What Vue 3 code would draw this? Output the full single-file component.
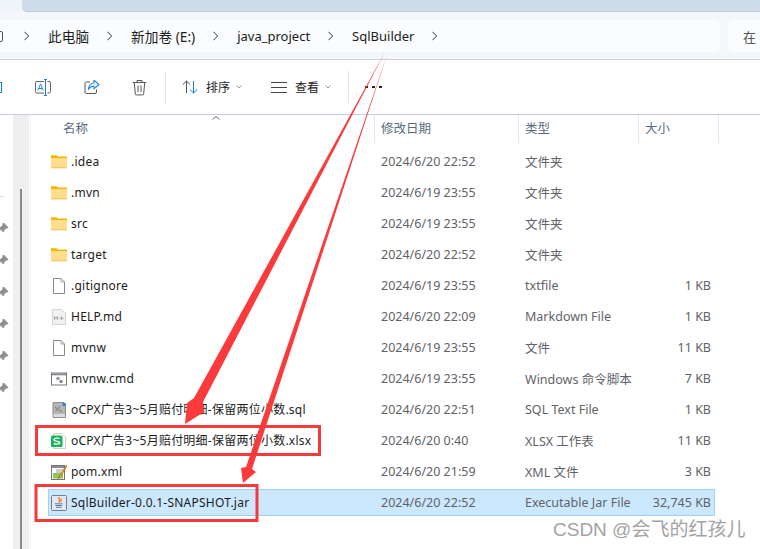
<script setup>
const crumbs = [
  { t: '此电脑', cjk: true },
  { t: '新加卷 (E:)', cjk: true },
  { t: 'java_project', cjk: false },
  { t: 'SqlBuilder', cjk: false }
]
const pins = [1, 2, 3, 4, 5, 6]
const files = [
  { n: '.idea', d: '2024/6/20 22:52', t: '文件夹', s: '', k: 'folder' },
  { n: '.mvn', d: '2024/6/19 23:55', t: '文件夹', s: '', k: 'folder' },
  { n: 'src', d: '2024/6/19 23:55', t: '文件夹', s: '', k: 'folder' },
  { n: 'target', d: '2024/6/20 22:52', t: '文件夹', s: '', k: 'folder' },
  { n: '.gitignore', d: '2024/6/19 23:55', t: 'txtfile', s: '1 KB', k: 'doc' },
  { n: 'HELP.md', d: '2024/6/20 22:09', t: 'Markdown File', s: '1 KB', k: 'md' },
  { n: 'mvnw', d: '2024/6/19 23:55', t: '文件', s: '11 KB', k: 'doc' },
  { n: 'mvnw.cmd', d: '2024/6/19 23:55', t: 'Windows 命令脚本', s: '7 KB', k: 'cmd' },
  { n: 'oCPX广告3~5月赔付明细-保留两位小数.sql', d: '2024/6/20 22:51', t: 'SQL Text File', s: '1 KB', k: 'sql' },
  { n: 'oCPX广告3~5月赔付明细-保留两位小数.xlsx', d: '2024/6/20 0:40', t: 'XLSX 工作表', s: '11 KB', k: 'xlsx' },
  { n: 'pom.xml', d: '2024/6/20 21:59', t: 'XML 文件', s: '3 KB', k: 'xml' },
  { n: 'SqlBuilder-0.0.1-SNAPSHOT.jar', d: '2024/6/20 22:52', t: 'Executable Jar File', s: '32,745 KB', k: 'jar', sel: true }
]
</script>

<template>
  <div class="page">
    <div class="tabs"><div class="tab"></div></div>

    <div class="address">
      <div class="crumbbox">
        <span class="edge"></span>
        <template v-for="c in crumbs" :key="c.t">
          <svg class="chev" width="7" height="10" viewBox="0 0 7 10"><path d="M1.500 .8 5.600 5 1.500 9.200" fill="none" stroke="#333" stroke-width="1"/></svg>
          <span class="crumb" :class="{ cjk: c.cjk }">{{ c.t }}</span>
        </template>
        <svg class="chev" width="7" height="10" viewBox="0 0 7 10"><path d="M1.500 .8 5.600 5 1.500 9.200" fill="none" stroke="#333" stroke-width="1"/></svg>
      </div>
      <div class="search">在</div>
    </div>

    <div class="toolbar">
      <span class="cutoff"></span>
      <svg class="tool rename" width="16" height="17" viewBox="0 0 16 17">
        <path d="M9 2.500H2A1.500 1.500 0 0 0 .5 4v8.500A1.500 1.500 0 0 0 2 14h7M12.500 2.500h1.500A1.500 1.500 0 0 1 15.500 4v8.500A1.500 1.500 0 0 1 14 14h-1.500" fill="none" stroke="#666" stroke-width="1"/>
        <path d="M10.500 .5v16M9 .5h3M9 16.500h3" fill="none" stroke="#1b7fd4" stroke-width="1"/>
        <path d="M2.800 11.500 5.500 4.800 8.200 11.500M3.800 9.500h3.400" fill="none" stroke="#2a86d8" stroke-width="1"/>
      </svg>
      <svg class="tool share" width="16" height="16" viewBox="0 0 16 16">
        <path d="M6 3H2.500A1.500 1.500 0 0 0 1 4.500v8.500A1.500 1.500 0 0 0 2.500 14.500h8.500a1.500 1.500 0 0 0 1.500-1.500v-2.500" fill="none" stroke="#555" stroke-width="1"/>
        <path d="M10 1.200 15 5.500 10 9.800V7.300C7.500 7.300 5.800 8.200 4.500 10.500 4.800 6.800 6.800 4.200 10 3.800Z" fill="#e8f3fc" stroke="#2a86d8" stroke-width="1.100" stroke-linejoin="round"/>
      </svg>
      <svg class="tool trash" width="15" height="17" viewBox="0 0 15 17">
        <path d="M.8 3.500h13.400M5 3.500V1.500h5v2M2.300 3.500l1 11.500a1 1 0 0 0 1 .9h6.400a1 1 0 0 0 1-.9l1-11.500M6 6.500v6.500M9 6.500v6.500" fill="none" stroke="#555" stroke-width="1"/>
      </svg>
      <span class="sep first"></span>
      <svg class="tool sort" width="16" height="14" viewBox="0 0 16 14">
        <path d="M4.500 13V1M.8 4.600 4.500 1 8.200 4.600" fill="none" stroke="#555" stroke-width="1"/>
        <path d="M11.500 1V13M7.800 9.400 11.500 13 15.200 9.400" fill="none" stroke="#1b7fd4" stroke-width="1"/>
      </svg>
      <span class="tlabel">排序</span>
      <svg class="tool down d1" width="6" height="4" viewBox="0 0 6 4"><path d="M.5.500 3 3 5.500.500" fill="none" stroke="#999" stroke-width="1"/></svg>
      <svg class="tool lines" width="16" height="11" viewBox="0 0 16 11"><path d="M0 .5h16M0 5.500h16M0 10.500h16" stroke="#444" stroke-width="1"/></svg>
      <span class="tlabel">查看</span>
      <svg class="tool down d2" width="6" height="4" viewBox="0 0 6 4"><path d="M.5.500 3 3 5.500.500" fill="none" stroke="#999" stroke-width="1"/></svg>
      <span class="sep second"></span>
      <span class="dots"><i></i><i></i><i></i></span>
    </div>

    <div class="body">
      <aside class="side">
        <div class="nav">
          <span class="navline"></span>
          <svg v-for="p in pins" :key="p" class="pin" width="12" height="12" viewBox="0 0 12 12">
            <path d="M6.500 1 11 5.500 9.800 6.200 8.800 6 6.800 8 6.500 10 2 5.500 4 5.200 6 3.200 5.800 2.200ZM3.800 7.200.5 11" fill="#8d8d8d" stroke="#8d8d8d" stroke-width="1"/>
          </svg>
        </div>
        <div class="track"><div class="thumb"></div></div>
        <div class="gutter"></div>
      </aside>

      <main class="list">
        <div class="head">
          <span class="hc hname">名称</span>
          <span class="hc hdate">修改日期</span>
          <span class="hc htype">类型</span>
          <span class="hc hsize">大小</span>
          <svg class="caret" width="8" height="4" viewBox="0 0 8 4"><path d="M.5 3.500 4 .5 7.500 3.500" fill="none" stroke="#666" stroke-width="1"/></svg>
        </div>
        <div class="rows">
          <div v-for="f in files" :key="f.n" class="row" :class="{ sel: f.sel }">
            <div class="name">
              <svg class="ficon" width="16" height="16" viewBox="0 0 16 16">
                <template v-if="f.k === 'folder'">
                  <path d="M0 1.200h5.500L7 2.500h9v2.500H0Z" fill="#f5b400"/>
                  <rect x="0" y="4" width="16" height="10" rx=".5" fill="#fedd8c"/>
                  <path d="M0 13.500h16v.8H0Z" fill="#efb83f"/>
                </template>
                <template v-else-if="f.k === 'doc'">
                  <path d="M2.500 .5H10L13.500 4V15.500H2.500Z" fill="#fff" stroke="#8a8a8a" stroke-width="1"/>
                  <path d="M10 .5V4h3.500" fill="none" stroke="#aaa" stroke-width="1"/>
                </template>
                <template v-else-if="f.k === 'md'">
                  <path d="M1.500 .5H10.500L14.500 4V15.500H1.500Z" fill="#f1f1f1" stroke="#d4d4d4" stroke-width="1"/>
                  <path d="M3.500 11V7.500L5 9.500 6.500 7.500V11M10.500 7.500V11M8.500 9.300h4" fill="none" stroke="#a8a8a8" stroke-width="1"/>
                </template>
                <template v-else-if="f.k === 'cmd'">
                  <rect x=".5" y="2" width="15" height="12" fill="#fff" stroke="#777" stroke-width="1"/>
                  <rect x="1" y="2.500" width="14" height="1.800" fill="#888"/>
                  <circle cx="7" cy="7.500" r="1.800" fill="#8f9aa5"/>
                  <circle cx="10" cy="10.500" r="1.600" fill="#6f7a85"/>
                </template>
                <template v-else-if="f.k === 'sql'">
                  <path d="M2 .5H13L14.500 2V15.500H2Z" fill="#b5b5b5" stroke="#8d8d8d" stroke-width="1"/>
                  <path d="M4 5 11 10M5 9 9 4" stroke="#8a8a8a" stroke-width="1.200"/>
                  <rect x="2.500" y="12" width="11.500" height="3" fill="#dcdcdc"/>
                  <rect x="11.500" y="1" width="3" height="3" fill="#2f7fd8"/>
                </template>
                <template v-else-if="f.k === 'xlsx'">
                  <path d="M2.500 .5H10.500L14.500 4V15.500H2.500Z" fill="#fff" stroke="#cfcfcf" stroke-width="1"/>
                  <rect x="0" y="2.500" width="11.500" height="11.500" rx="1.500" fill="#19b35a"/>
                  <path d="M8.800 5.500C7 4.800 3 4.800 3 6.800 3 8.800 8.800 7.800 8.800 9.800 8.800 11.500 4.600 11.300 2.800 10.600" fill="none" stroke="#fff" stroke-width="1.300"/>
                </template>
                <template v-else-if="f.k === 'xml'">
                  <rect x=".5" y="1.500" width="13" height="14" fill="#fff" stroke="#777" stroke-width="1"/>
                  <rect x="1" y="2" width="12" height="2" fill="#8b8b8b"/>
                  <rect x="2" y="9" width="10" height="5.500" fill="#8fc654"/>
                  <path d="M5 6h7M5 8h5" stroke="#999" stroke-width="1"/>
                  <path d="M15.500 1 8.500 11.500 7 14.500 9.800 12.500 16 2Z" fill="#f0b429" stroke="#9a5c12" stroke-width=".6"/>
                </template>
                <template v-else>
                  <rect x=".5" y=".5" width="15" height="15" rx="1" fill="#e4e8ee" stroke="#6f7f92" stroke-width="1"/>
                  <path d="M8.500 2C6.500 4 10 5 7.800 7.300M10.500 3.500C9 5 11 5.500 9.500 7" fill="none" stroke="#e0701f" stroke-width="1.100"/>
                  <path d="M4 8.800h7.500M4.500 10.500h6.500M5 12.300h5.500" stroke="#4f7fae" stroke-width="1"/>
                </template>
              </svg>
              <span class="fname">{{ f.n }}</span>
            </div>
            <span class="meta">{{ f.d }}</span>
            <span class="meta">{{ f.t }}</span>
            <span class="meta size">{{ f.s }}</span>
          </div>
        </div>
      </main>
    </div>

    <svg class="marks" width="760" height="549" viewBox="0 0 760 549">
      <polygon class="arrow" points="385,52 203,402 204,412 185,424 187,403 194,398"/>
      <polygon class="arrow" points="387,55 252,469 256,472 243,483 241,468 246,467"/>
      <rect class="box" x="36.500" y="426.500" width="283" height="28"/>
      <rect class="box" x="36" y="485.500" width="221" height="35"/>
    </svg>
    <div class="mark">CSDN @会飞的红孩儿</div>
  </div>
</template>

<style scoped>
.page {
  position: relative;
  width: 760px;
  height: 549px;
  overflow: hidden;
  background: #fff;
  font-family: "Noto Sans", "Noto Sans CJK SC", sans-serif;
  font-size: 13px;
  color: #1c1c1c;
}
.tabs { height: 12px; background: #eff4f9; padding-left: 22px; }
.tab { height: 12px; background: #cfdcea; border-bottom: 1px solid #bccbdc; border-bottom-left-radius: 5px; box-sizing: border-box; }
.address {
  height: 48px;
  box-sizing: border-box;
  display: flex;
  gap: 8px;
  padding: 8px 0 7px;
  background: #f3f6fa;
  border-bottom: 1px solid #c9d1dc;
}
.crumbbox {
  width: 720px;
  display: flex;
  align-items: center;
  gap: 17px;
  background: #fafcfe;
  border-radius: 0 5px 5px 0;
}
.edge { width: 5px; height: 11px; margin-left: -2px; margin-right: 3px; border: 1px solid #555; box-sizing: border-box; border-radius: 2px; }
.chev { flex: none; margin-right: 1px; }
.crumb { white-space: nowrap; }
.crumb.cjk { font-size: 13.700px; }
.search { flex: 1; background: #fafcfe; border-radius: 5px 0 0 5px; display: flex; align-items: center; padding-left: 15px; color: #555; }
.toolbar {
  height: 55px;
  box-sizing: border-box;
  display: flex;
  align-items: center;
  border-bottom: 1px solid #c5d0dc;
}
.cutoff { width: 2px; height: 11px; border: 1px solid #1b7fd4; border-left: 0; box-sizing: border-box; margin-right: 33px; }
.tool { flex: none; }
.rename { margin-right: 33px; }
.share { margin-right: 32px; }
.trash { margin-right: 18px; }
.sep { width: 1px; height: 32px; background: #e4e4e4; flex: none; }
.first { margin-right: 16px; }
.sort { margin-right: 8px; }
.tlabel { width: 24px; white-space: nowrap; font-size: 12px; margin-right: 6px; }
.d1 { margin-right: 29px; }
.lines { margin-right: 8px; }
.d2 { margin-right: 17px; }
.second { margin-right: 16px; }
.dots { display: flex; gap: 4px; }
.dots i { width: 3px; height: 2px; background: #222; display: block; }
.body { display: flex; height: 435px; }
.side { width: 31px; flex: none; display: flex; }
.nav { width: 13px; position: relative; padding-top: 107px; display: flex; flex-direction: column; gap: 20px; overflow: hidden; }
.navline { position: absolute; left: 0; top: 81px; width: 4px; height: 1px; background: #d8d8d8; }
.pin { margin-left: -3px; flex: none; }
.track { width: 16px; background: #efefef; padding: 74px 0 0 7px; box-sizing: border-box; }
.thumb { width: 2px; height: 100%; background: #8a8a8a; }
.gutter { width: 1px; border-right: 1px solid #f0f0f0; }
.list { flex: 1; position: relative; }
.head { display: flex; height: 28px; color: #5b6b7d; font-size: 12.500px; }
.hc { box-sizing: border-box; border-right: 1px solid #e2e5e9; padding-left: 6px; line-height: 28px; white-space: nowrap; }
.hname { width: 344px; padding-left: 32px; }
.hdate { width: 144px; }
.htype { width: 120px; }
.hsize { width: 80px; }
.caret { position: absolute; left: 181px; top: 1px; }
.rows { padding: 5px 0 0 17px; display: flex; flex-direction: column; gap: 4px; }
.row {
  width: 667px;
  height: 27px;
  box-sizing: border-box;
  border: 1px solid transparent;
  padding: 0 3px 0 2px;
  display: grid;
  grid-template-columns: 330px 144px 116px 70px;
  align-items: center;
  white-space: nowrap;
}
.row.sel { background: #cce8ff; border-color: #99d1ff; }
.name { display: flex; align-items: center; gap: 4px; }
.ficon { flex: none; }
.fname { white-space: nowrap; font-size: 12px; letter-spacing: .24px; margin-bottom: 1px; }
.meta { color: #5f6368; font-size: 12.500px; }
.size { text-align: right; }
.marks { position: absolute; left: 0; top: 0; pointer-events: none; }
.arrow { fill: #fb3b3b; }
.box { fill: none; stroke: #f53a3a; stroke-width: 3; }
.mark {
  position: absolute;
  left: 553px;
  top: 518px;
  font-family: "Liberation Sans", "Noto Sans CJK SC", sans-serif;
  font-size: 19px;
  line-height: 24px;
  color: #a3a3a3;
  text-shadow: 1px 1px 1px rgba(255, 255, 255, .8);
  white-space: nowrap;
}
</style>
